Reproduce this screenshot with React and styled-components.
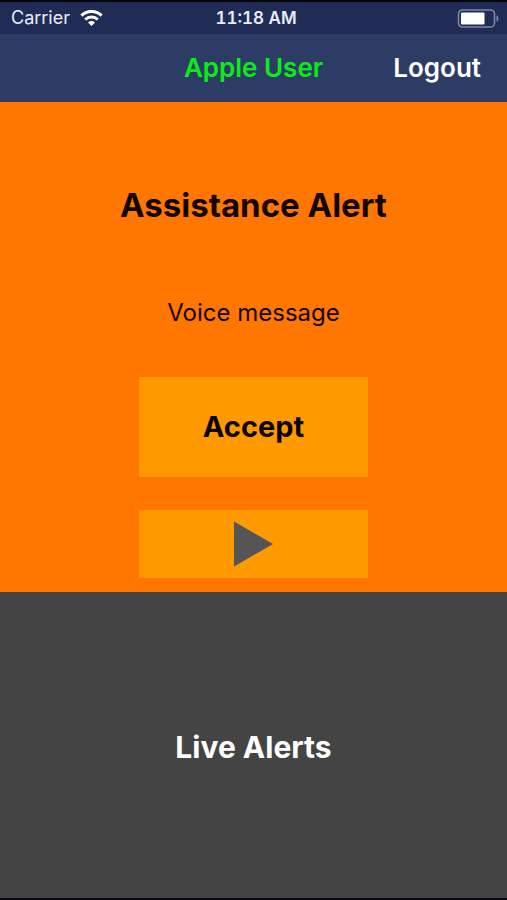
import React from "react";
import styled, { createGlobalStyle } from "styled-components";

const GlobalStyle = createGlobalStyle`
  *, *::before, *::after { box-sizing: border-box; }
  html, body, #root { height: 100%; }
  body {
    margin: 0;
    background: #000;
    font-family: Inter, "Liberation Sans", sans-serif;
  }
`;

const Screen = styled.div`
  display: flex;
  flex-direction: column;
  min-height: 100vh;
  padding: 2px 0;
  background: #06060c;
`;

const StatusBar = styled.div`
  display: grid;
  grid-template-columns: 1fr auto 1fr;
  align-items: center;
  height: 32px;
  padding: 0 8px 0 11px;
  background: #212c56;
  color: #e9edf8;
  font-size: 18px;
  line-height: 24px;
`;

const Carrier = styled.div`
  display: flex;
  align-items: center;
  gap: 10px;
`;

const Clock = styled.time`
  padding-left: 2px;
  font-size: 17px;
  font-weight: 600;
  font-variant-numeric: tabular-nums;
`;

const Battery = styled.svg`
  justify-self: end;
`;

const NavBar = styled.header`
  display: grid;
  grid-template-columns: 1fr auto 1fr;
  align-items: center;
  height: 68px;
  padding: 0 26px;
  background: #2c3c65;
`;

const UserName = styled.h1`
  grid-column: 2;
  margin: 0;
  color: #0cec16;
  font-size: 26px;
  font-weight: 600;
  line-height: 32px;
`;

const LogoutButton = styled.button`
  justify-self: end;
  padding: 0;
  border: 0;
  background: none;
  color: #fff;
  font: 600 26px/32px Inter, "Liberation Sans", sans-serif;
  cursor: pointer;
`;

const AlertPanel = styled.main`
  display: flex;
  flex-direction: column;
  align-items: center;
  padding: 83px 0 14px;
  background: #ff7600;
  color: #120600;
`;

const AlertTitle = styled.h2`
  margin: 0 0 72px;
  font-size: 33px;
  font-weight: 700;
  line-height: 40px;
`;

const AlertText = styled.p`
  margin: 0 0 48px;
  font-size: 24px;
  line-height: 32px;
`;

const ActionButton = styled.button`
  display: flex;
  align-items: center;
  justify-content: center;
  width: 45%;
  height: ${({ $tall }) => ($tall ? 100 : 68)}px;
  padding: 0;
  border: 0;
  background: #ff9900;
  color: #0a0400;
  font: 700 29px/36px Inter, "Liberation Sans", sans-serif;
  cursor: pointer;

  & + & { margin-top: 33px; }
`;

const LivePanel = styled.section`
  display: flex;
  flex: 1;
  align-items: center;
  justify-content: center;
  padding-top: 4px;
  background: #444;
  color: #fff;
`;

const LiveTitle = styled.h2`
  margin: 0;
  font-size: 30px;
  font-weight: 700;
  line-height: 36px;
`;

function WifiIcon() {
  return (
    <svg width="23" height="17" viewBox="0 0 23 17" fill="none" aria-label="Wi-Fi" role="img">
      <path d="M1.4 5.6a14.3 14.3 0 0 1 20.2 0" stroke="#fff" strokeWidth="3" />
      <path d="M5.2 9.6a8.9 8.9 0 0 1 12.6 0" stroke="#fff" strokeWidth="2.8" />
      <path d="M11.5 16 8 12.5a5 5 0 0 1 7 0z" fill="#fff" />
    </svg>
  );
}

function BatteryIcon() {
  return (
    <Battery width="42" height="19" viewBox="0 0 42 19" aria-label="Battery" role="img">
      <rect x="1.5" y="1" width="36" height="17" rx="4" fill="none" stroke="#7f86a3" strokeWidth="1.6" />
      <rect x="4" y="3.5" width="23.5" height="12" rx="1" fill="#fff" />
      <path d="M39.5 6.2c2.6 1.2 2.6 5.4 0 6.6z" fill="#7f86a3" />
    </Battery>
  );
}

function PlayIcon() {
  return (
    <svg width="39" height="46" viewBox="0 0 39 46" aria-hidden="true">
      <path d="M0 0.5 39 23 0 45.5z" fill="#555" />
    </svg>
  );
}

export default function App() {
  return (
    <>
      <GlobalStyle />
      <Screen>
        <StatusBar>
          <Carrier>
            Carrier
            <WifiIcon />
          </Carrier>
          <Clock>11:18 AM</Clock>
          <BatteryIcon />
        </StatusBar>
        <NavBar>
          <UserName>Apple User</UserName>
          <LogoutButton type="button">Logout</LogoutButton>
        </NavBar>
        <AlertPanel>
          <AlertTitle>Assistance Alert</AlertTitle>
          <AlertText>Voice message</AlertText>
          <ActionButton type="button" $tall>Accept</ActionButton>
          <ActionButton type="button" aria-label="Play voice message">
            <PlayIcon />
          </ActionButton>
        </AlertPanel>
        <LivePanel>
          <LiveTitle>Live Alerts</LiveTitle>
        </LivePanel>
      </Screen>
    </>
  );
}
